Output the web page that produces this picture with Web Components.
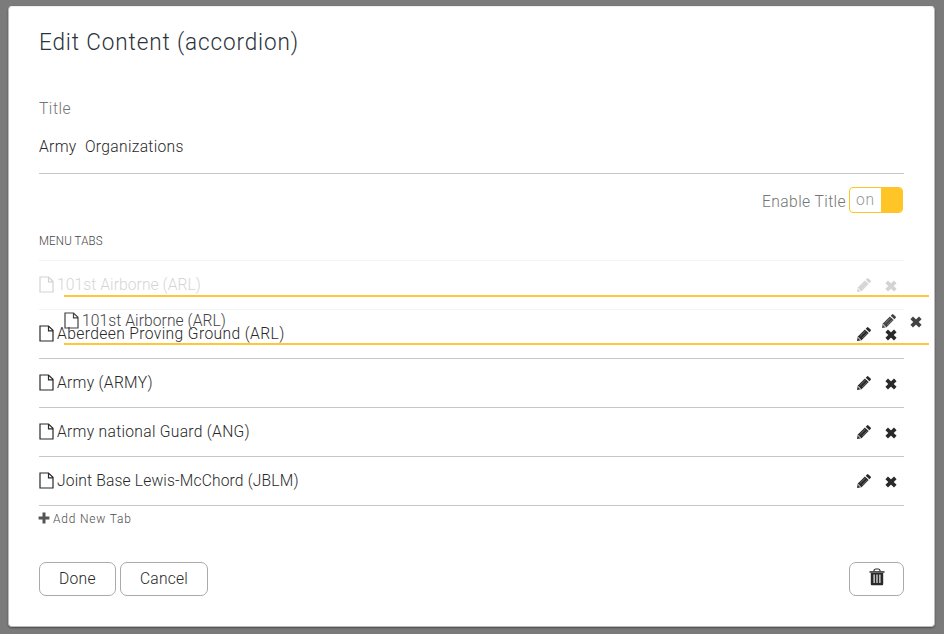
<!DOCTYPE html>
<html lang="en"><head><meta charset="utf-8"><title>Edit Content</title>
<style>
html,body{margin:0;height:100%}
body{background:#7b7b7b;font-family:Roboto,"Liberation Sans",sans-serif;font-weight:300;font-size:16.5px;color:#292929;overflow:hidden}
</style></head><body>
<edit-dialog></edit-dialog>
<script>
const define=(name,html,setup)=>customElements.define(name,class extends HTMLElement{
  connectedCallback(){
    if(this.shadowRoot)return;
    const t=document.createElement('template');
    t.innerHTML=html;
    this.attachShadow({mode:'open'}).append(t.content.cloneNode(true));
    if(setup)setup.call(this,this.shadowRoot);
  }
});

// A line of slightly condensed text whose tracking is adjusted to a given width.
const CONDENSE=.92;
define('fit-text',`<style>:host{display:inline-block;white-space:pre}span{display:inline-block;transform:scaleX(${CONDENSE});transform-origin:0 50%}</style><span><slot></slot></span>`,function(root){
  const w=+this.getAttribute('w'),s=root.querySelector('span');
  const n=this.textContent.length;
  this.style.letterSpacing=((w/CONDENSE-s.offsetWidth)/n)+'px';
  this.style.width=w+'px';
});

const icons={
  file:[15,17,'<path d="M1 1h8.5l4.5 4.3V16H1z M9.5 1v4.8H14" fill="none" stroke="currentColor" stroke-width="1.2"/>'],
  pencil:[14,14,'<path d="M0 14 .8 9.5 7.9 2.4 11.7 6.1 4.5 13.2z M8.7 1.7 10 .4q.7-.7 1.4 0l2.2 2.2q.7.7 0 1.4L12.4 5.3z" fill="currentColor"/><path d="M1.6 10.1l.2 1.5 1 .2.2 1.1 1 .1" fill="none" stroke="#fff" stroke-width=".75"/><path d="M3.2 9.2 8.5 3.9M5.3 11 10.6 5.7" stroke="#fff" stroke-opacity=".55" stroke-width=".6"/>'],
  close:[12,12,'<path d="M1.7 1.9 10.3 10.1M10.3 1.9 1.7 10.1" stroke="currentColor" stroke-width="3.7"/>'],
  plus:[12,12,'<path d="M6 .6v10.8M.6 6h10.8" stroke="currentColor" stroke-width="3"/>'],
  trash:[16,18,'<path d="M.5 3.2h15v1.5H.5z" fill="currentColor"/><path d="M4.8 3.2Q5.2 1 6.5 1h3q1.3 0 1.7 2.2" fill="none" stroke="currentColor" stroke-width="1.2"/><path d="M1.8 5h12.4v11.3q0 1-1 1H2.8q-1 0-1-1z" fill="currentColor"/><path d="M5.1 6.6v8.3M8 6.6v8.3M10.9 6.6v8.3" stroke="#fff" stroke-width="1.1"/>']
};
define('ui-icon',`<style>:host{display:inline-flex;flex:none}svg{display:block}</style>`,function(root){
  const [w,h,body]=icons[this.getAttribute('name')];
  root.innerHTML+=`<svg width="${w}" height="${h}" viewBox="0 0 ${w} ${h}">${body}</svg>`;
});

define('tab-row',`<style>
:host{display:flex;box-sizing:border-box;height:49px;border-bottom:1px solid #c6c6c6;align-items:center;color:#292929}
:host([source]){opacity:.2}
:host([dragging]){position:absolute;left:25px;top:34px;width:865px;height:50px;padding-top:2px;border-top:2px solid #ffbf1f;border-bottom:2px solid #ffbf1f;opacity:.88;z-index:2}
.label{padding:0 0 2px 3px;line-height:20px}
.tools{margin-left:auto;display:flex;align-items:center;gap:14px;padding:0 7px 0 0}
ui-icon[name=file]{margin-top:-1px}
ui-icon[name=close]{margin-top:1px}
</style><ui-icon name="file"></ui-icon><div class="label"><slot></slot></div>
<div class="tools"><ui-icon name="pencil"></ui-icon><ui-icon name="close"></ui-icon></div>`);

define('toggle-switch',`<style>
:host{display:flex;box-sizing:border-box;width:54px;height:26px;border:1px solid #ffc425;border-radius:4px;overflow:hidden;color:#999}
.t{width:31px;line-height:23px;text-align:center}
.k{flex:1;background:#ffc425}
</style><div class="t"><slot></slot></div><div class="k"></div>`);

define('ui-button',`<style>
:host{display:flex;box-sizing:border-box;height:34px;border:1px solid #aaa;border-radius:7px;align-items:center;justify-content:center;padding-bottom:2px}
</style><slot></slot>`);

define('edit-dialog',`<style>
:host{display:block;box-sizing:border-box;margin:0 9px 0 8px;padding-top:6px;font-size:17px}
.panel{box-sizing:border-box;height:621px;background:#fff;border:1px solid #bbb;border-top-color:#eee;border-radius:4px;padding:0 30px;box-shadow:0 1px 2px #0006}
h1{margin:0;padding-top:19px;font:300 24.5px/32px Roboto,sans-serif;color:#2b333b}
.name{color:#757575;line-height:20px;margin-top:40px}
.value{height:37px;padding-top:18px;line-height:20px;border-bottom:1px solid #c6c6c6}
.enable{display:flex;justify-content:flex-end;align-items:center;gap:3px;color:#757575;height:26px;margin-top:13px;padding-right:1px}
.enable>fit-text{padding-top:2px}
h2{margin:19px 0 0;font:300 12.5px/18px Roboto,sans-serif;color:#444}
.rows{position:relative;border-top:1px solid #f4f4f4;margin-top:10px}
.add{display:flex;align-items:center;gap:3px;font-size:13px;line-height:18px;color:#4c4c4c;margin:4px 0 0 -1px}
.add ui-icon{color:#555;margin-top:-3px}
.buttons{display:flex;gap:4px;margin-top:34px}
.buttons .del{margin-left:auto;width:55px;padding-bottom:4px}
</style>
<div class="panel">
<h1><fit-text w="260">Edit Content (accordion)</fit-text></h1>
<div class="name"><fit-text w="32">Title</fit-text></div>
<div class="value"><fit-text w="145">Army  Organizations</fit-text></div>
<div class="enable"><fit-text w="84">Enable Title</fit-text><toggle-switch><fit-text w="19">on</fit-text></toggle-switch></div>
<h2><fit-text w="64">MENU TABS</fit-text></h2>
<div class="rows">
<tab-row source><fit-text w="144">101st Airborne (ARL)</fit-text></tab-row>
<tab-row><fit-text w="228">Aberdeen Proving Ground (ARL)</fit-text></tab-row>
<tab-row><fit-text w="96">Army (ARMY)</fit-text></tab-row>
<tab-row><fit-text w="193">Army national Guard (ANG)</fit-text></tab-row>
<tab-row><fit-text w="242">Joint Base Lewis-McChord (JBLM)</fit-text></tab-row>
<tab-row dragging><fit-text w="144">101st Airborne (ARL)</fit-text></tab-row>
</div>
<div class="add"><ui-icon name="plus"></ui-icon><fit-text w="79">Add New Tab</fit-text></div>
<div class="buttons"><ui-button style="width:77px"><fit-text w="37">Done</fit-text></ui-button><ui-button style="width:88px"><fit-text w="48">Cancel</fit-text></ui-button><ui-button class="del"><ui-icon name="trash"></ui-icon></ui-button></div>
</div>`);
</script></body></html>
